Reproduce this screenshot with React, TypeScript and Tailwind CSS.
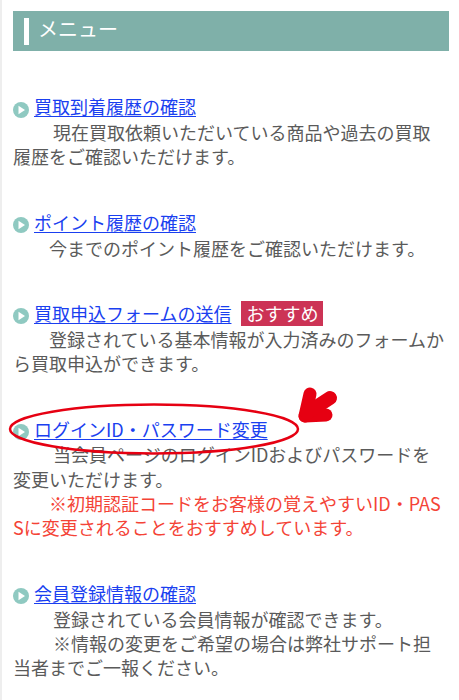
const font = { fontFamily: '"Noto Sans CJK JP", "Noto Sans", sans-serif' }

function MenuLink({ title, badge }: { title: string; badge?: string }) {
  return (
    <div className="flex items-center h-[24px]">
      <svg width="16" height="16" viewBox="0 0 16 16" className="mr-[5px] mt-[3px] shrink-0">
        <circle cx="8" cy="8" r="8" fill="#8fc9c1" />
        <path d="M5.5 3.8 L12 8 L5.5 12.2 Z" fill="#ffffff" />
      </svg>
      <a href="#" className="-mt-[3px] text-[#1a3ff0] underline underline-offset-2">
        {title}
      </a>
      {badge && (
        <span className="ml-[10px] -mt-[3px] bg-[#cc3355] text-white px-[5px] h-[25px] leading-[25px]">{badge}</span>
      )}
    </div>
  )
}

const sections = [
  {
    title: "買取到着履歴の確認",
    lines: [{ text: "\u3000\u3000 現在買取依頼いただいている商品や過去の買取履歴をご確認いただけます。" }],
  },
  {
    title: "ポイント履歴の確認",
    lines: [{ text: "\u3000\u3000今までのポイント履歴をご確認いただけます。" }],
  },
  {
    title: "買取申込フォームの送信",
    badge: "おすすめ",
    lines: [{ text: "\u3000\u3000登録されている基本情報が入力済みのフォームから買取申込ができます。" }],
  },
  {
    title: "ログインID・パスワード変更",
    lines: [
      { text: "\u3000\u3000 当会員ページのログインIDおよびパスワードを変更いただけます。" },
      { text: "\u3000\u3000※初期認証コードをお客様の覚えやすいID・PASSに変更されることをおすすめしています。", red: true },
    ],
  },
  {
    title: "会員登録情報の確認",
    lines: [
      { text: "\u3000\u3000 登録されている会員情報が確認できます。" },
      { text: "\u3000\u3000 ※情報の変更をご希望の場合は弊社サポート担当者までご一報ください。" },
    ],
  },
]

export default function App() {
  return (
    <div className="relative h-[700px] overflow-hidden bg-white border-l-2 border-[#eeeeee]" style={font}>
      <div className="pl-[11px] pr-[10px] pt-[11px]">
        {/* Header */}
        <div className="flex items-center h-[40px] bg-[#7fb0a9] pl-[11px]">
          <div className="w-[5px] h-[27px] bg-white" />
          <h2 className="ml-[9px] -mt-[5px] text-[20px] text-white">メニュー</h2>
        </div>

        <div className="pt-[45px] pr-[3px] flex flex-col gap-[43px] text-[18px] leading-[24.3px] text-[#5a5a5a]">
          {sections.map((s) => (
            <div key={s.title}>
              <MenuLink title={s.title} badge={s.badge} />
              {s.lines.map((l) => (
                <p key={l.text} className={`whitespace-pre-wrap break-all ${l.red ? "text-[#f44336]" : ""}`}>
                  {l.text}
                </p>
              ))}
            </div>
          ))}
        </div>
      </div>

      {/* Hand drawn ellipse and arrow over the page */}
      <svg className="absolute left-[-2px] top-0 pointer-events-none" width="459" height="700" viewBox="0 0 459 700">
        <ellipse cx="154" cy="429" rx="144" ry="24.5" fill="none" stroke="#e60012" strokeWidth="2.5" />
        <g stroke="#e60012" fill="none" strokeLinecap="round" strokeLinejoin="round">
          <path d="M305 416 L310 394" strokeWidth="13" />
          <path d="M305 416 L326 415" strokeWidth="13" />
          <path d="M307 413 L330 398" strokeWidth="14" />
        </g>
      </svg>
    </div>
  )
}
